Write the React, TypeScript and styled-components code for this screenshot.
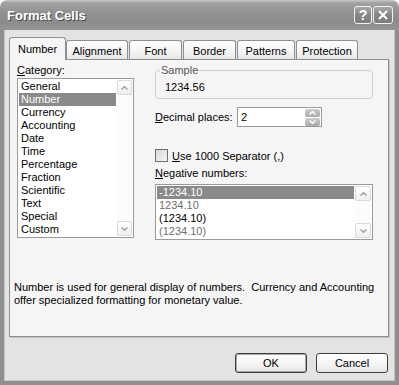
import React from 'react';
import styled, { createGlobalStyle } from 'styled-components';

const GlobalStyle = createGlobalStyle`
  html, body {
    margin: 0;
    padding: 0;
    background: #ffffff;
  }
  body {
    font-family: "Liberation Sans", Arial, sans-serif;
    font-size: 11px;
    color: #000;
  }
  * {
    box-sizing: border-box;
  }
`;

const Window = styled.div`
  width: 399px;
  height: 385px;
  display: flex;
  flex-direction: column;
  border-radius: 7px 7px 0 0;
  overflow: hidden;
`;

const TitleBar = styled.div`
  height: 30px;
  flex: none;
  display: flex;
  align-items: center;
  justify-content: space-between;
  padding: 0 6px 0 7px;
  background: linear-gradient(180deg, #c8c8c8 0%, #a2a2a2 10%, #929292 40%, #8b8b8b 75%, #979797 100%);
`;

const TitleText = styled.div`
  color: #fff;
  font-weight: bold;
  font-size: 13px;
  text-shadow: 1px 1px 0 #4a4a4a;
  padding-top: 1px;
`;

const CaptionButtons = styled.div`
  display: flex;
  gap: 1px;
`;

const CaptionButton = styled.div<{ $w: number }>`
  width: ${p => p.$w}px;
  height: 18px;
  border: 1px solid #f2f2f2;
  border-radius: 3px;
  background: linear-gradient(180deg, #a8a8a8 0%, #878787 50%, #7c7c7c 100%);
  color: #fff;
  font-weight: bold;
  font-size: 14px;
  display: flex;
  align-items: center;
  justify-content: center;
`;

const Body = styled.div`
  flex: 1;
  display: flex;
  flex-direction: column;
  padding: 7px 6px 8px 5px;
  background: #e3e3e3;
  border: 4px solid #8f8f8f;
  border-top: none;
  box-shadow: inset 1px 0 #c6c6c6, inset -1px 0 #c6c6c6, inset 0 -1px #c6c6c6;
`;

const TabStrip = styled.div`
  height: 22px;
  display: flex;
  align-items: flex-end;
`;

const Tab = styled.div<{ $active?: boolean; $w: number }>`
  width: ${p => p.$w}px;
  height: ${p => (p.$active ? 23 : 19)}px;
  margin-right: ${p => (p.$active ? 0 : 1)}px;
  margin-bottom: ${p => (p.$active ? -1 : 0)}px;
  padding-top: ${p => (p.$active ? 0 : 1)}px;
  position: relative;
  z-index: ${p => (p.$active ? 2 : 0)};
  border: 1px solid #8f8f8f;
  border-bottom: none;
  border-radius: 3px 3px 0 0;
  background: ${p =>
    p.$active ? '#f5f5f5' : 'linear-gradient(180deg, #ffffff 0%, #f4f4f4 60%, #e6e6e6 100%)'};
  display: flex;
  align-items: center;
  justify-content: center;
`;

const Panel = styled.div`
  height: 278px;
  flex: none;
  background: #f5f5f5;
  border: 1px solid #8f8f8f;
  box-shadow: 1px 1px 0 #c4c4c4;
  padding-top: 4px;
  display: flex;
  flex-direction: column;
`;

const TopRow = styled.div`
  display: flex;
  gap: 21px;
  padding-left: 7px;
`;

const LeftCol = styled.div`
  width: 117px;
  display: flex;
  flex-direction: column;
`;

const RightCol = styled.div`
  width: 218px;
  display: flex;
  flex-direction: column;
`;

const Label = styled.div<{ $mt?: number }>`
  line-height: 13px;
  height: 13px;
  margin-top: ${p => p.$mt ?? 0}px;
  white-space: nowrap;
`;

const ListBox = styled.div<{ $h: number; $mt: number }>`
  height: ${p => p.$h}px;
  margin-top: ${p => p.$mt}px;
  border: 1px solid #9a9a9a;
  background: #fff;
  padding: 1px;
  display: flex;
`;

const ListItems = styled.div`
  flex: 1;
  display: flex;
  flex-direction: column;
`;

const ListItem = styled.div<{ $selected?: boolean; $tone?: string }>`
  height: 13px;
  line-height: 13px;
  padding-left: 2px;
  white-space: nowrap;
  background: ${p => (p.$selected ? '#8a8a8a' : 'transparent')};
  color: ${p => (p.$selected ? '#fff' : p.$tone || '#000')};
`;

const ScrollBar = styled.div<{ $w: number }>`
  width: ${p => p.$w}px;
  margin-left: 1px;
  display: flex;
  flex-direction: column;
  justify-content: space-between;
  background: #fbfbfb;
`;

const ScrollButton = styled.div`
  height: 15px;
  border: 1px solid #dadada;
  border-radius: 2px;
  background: linear-gradient(180deg, #ffffff 0%, #efefef 100%);
  display: flex;
  align-items: center;
  justify-content: center;
`;

const GroupBox = styled.div`
  margin-top: 6px;
  border: 1px solid #cdcdcd;
  border-radius: 4px;
  padding: 0 8px 4px 9px;
`;

const GroupTitle = styled.div`
  width: fit-content;
  margin: -7px 0 0 -5px;
  padding: 0 1px;
  background: #f5f5f5;
  color: #555;
  line-height: 13px;
`;

const SampleValue = styled.div`
  margin-top: 4px;
  line-height: 13px;
`;

const FieldRow = styled.div<{ $mt: number }>`
  display: flex;
  align-items: center;
  margin-top: ${p => p.$mt}px;
`;

const FieldLabel = styled.div`
  width: 82px;
`;

const NumberInput = styled.div`
  width: 85px;
  height: 20px;
  border: 1px solid #9a9a9a;
  background: #fff;
  display: flex;
  align-items: center;
  justify-content: space-between;
  padding: 0 1px 0 3px;
`;

const Spinner = styled.div`
  width: 15px;
  height: 17px;
  display: flex;
  flex-direction: column;
  gap: 1px;
`;

const SpinHalf = styled.div`
  flex: 1;
  border-radius: 2px;
  background: linear-gradient(180deg, #cdcdcd 0%, #a9a9a9 100%);
  display: flex;
  align-items: center;
  justify-content: center;
`;

const CheckBox = styled.div`
  width: 13px;
  height: 13px;
  border: 1px solid #6f6f6f;
  background: linear-gradient(135deg, #d9d9d9 0%, #f4f4f4 100%);
  margin-right: 4px;
`;

const Description = styled.div`
  margin-top: 41px;
  padding-left: 4px;
  line-height: 13px;
  white-space: pre;
`;

const ButtonRow = styled.div`
  margin-top: 16px;
  display: flex;
  justify-content: flex-end;
  gap: 9px;
  padding-right: 1px;
`;

const DialogButton = styled.button<{ $default?: boolean }>`
  width: 72px;
  height: 20px;
  padding: 0;
  font-family: "Liberation Sans", Arial, sans-serif;
  font-size: 11px;
  color: #000;
  border: 1px solid #3e3e3e;
  border-radius: 3px;
  background: linear-gradient(180deg, #ffffff 0%, #f3f3f3 60%, #e4e4e4 100%);
  box-shadow: ${p => (p.$default ? 'inset 0 0 0 1px #a8a8a8' : 'none')};
`;

const U = styled.span`
  text-decoration: underline;
`;

const Chevron = ({ up, color = '#a0a0a0' }: { up?: boolean; color?: string }) => (
  <svg width="7" height="4" viewBox="0 0 7 4">
    <polyline
      points={up ? '0.5,3.5 3.5,0.7 6.5,3.5' : '0.5,0.5 3.5,3.3 6.5,0.5'}
      fill="none"
      stroke={color}
      strokeWidth="1.4"
    />
  </svg>
);

const categories = [
  'General', 'Number', 'Currency', 'Accounting', 'Date', 'Time',
  'Percentage', 'Fraction', 'Scientific', 'Text', 'Special', 'Custom',
];

const negatives = [
  { text: '-1234.10', selected: true },
  { text: '1234.10', tone: '#6e6e6e' },
  { text: '(1234.10)', tone: '#000' },
  { text: '(1234.10)', tone: '#6e6e6e' },
];

const tabs = [
  { name: 'Number', w: 57 },
  { name: 'Alignment', w: 62 },
  { name: 'Font', w: 53 },
  { name: 'Border', w: 53 },
  { name: 'Patterns', w: 58 },
  { name: 'Protection', w: 62 },
];

const App: React.FC = () => (
  <>
    <GlobalStyle />
    <Window>
      <TitleBar>
        <TitleText>Format Cells</TitleText>
        <CaptionButtons>
          <CaptionButton $w={18}>?</CaptionButton>
          <CaptionButton $w={20}>
            <svg width="10" height="10" viewBox="0 0 10 10">
              <path d="M1 1 L9 9 M9 1 L1 9" stroke="#fff" strokeWidth="2" />
            </svg>
          </CaptionButton>
        </CaptionButtons>
      </TitleBar>

      <Body>
        <TabStrip>
          {tabs.map((t, i) => (
            <Tab key={t.name} $w={t.w} $active={i === 0}>{t.name}</Tab>
          ))}
        </TabStrip>

        <Panel>
          <TopRow>
            <LeftCol>
              <Label><U>C</U>ategory:</Label>
              <ListBox $h={160} $mt={1}>
                <ListItems>
                  {categories.map(c => (
                    <ListItem key={c} $selected={c === 'Number'}>{c}</ListItem>
                  ))}
                </ListItems>
                <ScrollBar $w={15}>
                  <ScrollButton><Chevron up /></ScrollButton>
                  <ScrollButton><Chevron /></ScrollButton>
                </ScrollBar>
              </ListBox>
            </LeftCol>

            <RightCol>
              <GroupBox>
                <GroupTitle>Sample</GroupTitle>
                <SampleValue>1234.56</SampleValue>
              </GroupBox>

              <FieldRow $mt={8}>
                <FieldLabel><U>D</U>ecimal places:</FieldLabel>
                <NumberInput>
                  <span>2</span>
                  <Spinner>
                    <SpinHalf><Chevron up color="#fff" /></SpinHalf>
                    <SpinHalf><Chevron color="#fff" /></SpinHalf>
                  </Spinner>
                </NumberInput>
              </FieldRow>

              <FieldRow $mt={22}>
                <CheckBox />
                <span><U>U</U>se 1000 Separator (,)</span>
              </FieldRow>

              <Label $mt={5}><U>N</U>egative numbers:</Label>
              <ListBox $h={56} $mt={4}>
                <ListItems>
                  {negatives.map((n, i) => (
                    <ListItem key={i} $selected={n.selected} $tone={n.tone}>{n.text}</ListItem>
                  ))}
                </ListItems>
                <ScrollBar $w={16}>
                  <ScrollButton><Chevron up /></ScrollButton>
                  <ScrollButton><Chevron /></ScrollButton>
                </ScrollBar>
              </ListBox>
            </RightCol>
          </TopRow>

          <Description>
            {'Number is used for general display of numbers.  Currency and Accounting\noffer specialized formatting for monetary value.'}
          </Description>
        </Panel>

        <ButtonRow>
          <DialogButton $default>OK</DialogButton>
          <DialogButton>Cancel</DialogButton>
        </ButtonRow>
      </Body>
    </Window>
  </>
);

export default App;
